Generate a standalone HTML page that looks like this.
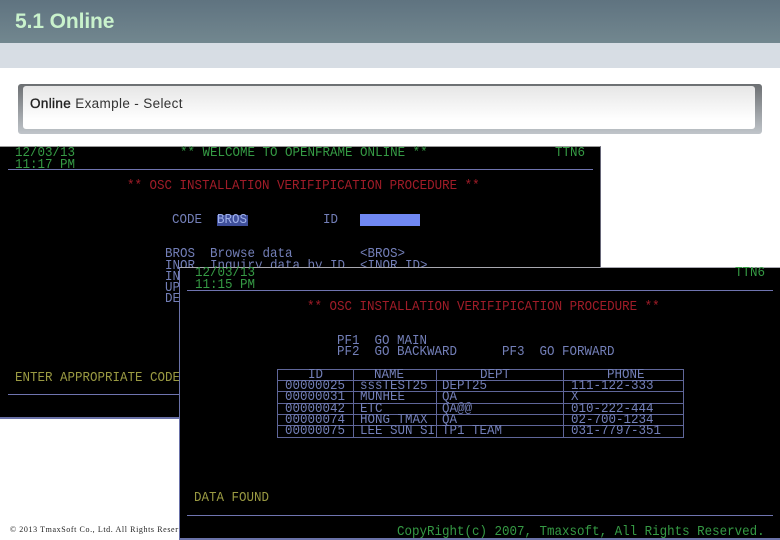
<!DOCTYPE html>
<html><head><meta charset="utf-8"><style>
html,body{margin:0;padding:0}
body{width:780px;height:540px;background:#fff;position:relative;overflow:hidden;font-family:"Liberation Sans",sans-serif}
div{position:absolute}
.t{font:14px/12px "Liberation Mono",monospace;white-space:pre;height:12px;margin-top:-1px;transform:scaleX(.893);transform-origin:0 0}
.g{color:#359a44}.r{color:#a01c28}.b{color:#737fb8}.y{color:#9a9a42}
.h{height:1px;background:#6f74b0}
.l{background:#5f6699}
</style></head><body>
<div style="left:0;top:0;width:780px;height:43px;background:linear-gradient(#5f7380,#72878f)"></div>
<div style="left:0;top:43px;width:780px;height:25px;background:#d7dde4"></div>
<div style="left:15px;top:9px;font:bold 21px/26px 'Liberation Sans',sans-serif;color:#c9f2cc;letter-spacing:-.1px">5.1 Online</div>
<div style="left:18px;top:84px;width:744px;height:50px;border-radius:3px;background:linear-gradient(#6c6f72,#c0c5ca)"></div>
<div style="left:23px;top:86px;width:732px;height:43px;border-radius:3px;background:linear-gradient(#e6e6e6,#fff 80%)"></div>
<div style="left:30px;top:95px;font:13.5px/18px 'Liberation Sans',sans-serif;color:#333;letter-spacing:.35px;white-space:pre"><span style="-webkit-text-stroke:.35px #222;color:#222">Online</span> Example - Select</div>
<div style="left:10px;top:525px;font:8px/10px 'Liberation Serif',serif;color:#222;white-space:pre;letter-spacing:.6px">© 2013 TmaxSoft Co., Ltd. All Rights Reserved.</div>

<div style="left:0;top:146px;width:601px;height:272px;background:#000;border-top:1px solid #999;border-right:1px solid #667;box-sizing:border-box"></div>
<div style="left:0;top:417px;width:601px;height:2px;background:#6a72a8"></div>
<div class="t g" style="left:15px;top:148px">12/03/13</div>
<div class="t g" style="left:15px;top:160px">11:17 PM</div>
<div class="h" style="left:8px;top:169px;width:585px"></div>
<div class="t g" style="left:180px;top:148px">** WELCOME TO OPENFRAME ONLINE **</div>
<div class="t g" style="left:555px;top:148px">TTN6</div>
<div class="t r" style="left:127px;top:181px">** OSC INSTALLATION VERIFIPICATION PROCEDURE **</div>
<div class="t b" style="left:172px;top:215px">CODE</div>
<div style="left:217px;top:215px;width:31px;height:11px;background:#3f4f9a"></div>
<div class="t" style="left:217px;top:215px;color:#9fb0ea">BROS</div>
<div class="t b" style="left:323px;top:215px">ID</div>
<div style="left:360px;top:214px;width:60px;height:12px;background:#6f87f2"></div>
<div class="t b" style="left:165px;top:249px">BROS  Browse data</div>
<div class="t b" style="left:360px;top:249px">&lt;BROS&gt;</div>
<div class="t b" style="left:165px;top:261px">INOR  Inquiry data by ID</div>
<div class="t b" style="left:360px;top:261px">&lt;INOR ID&gt;</div>
<div class="t b" style="left:165px;top:272px">IN</div>
<div class="t b" style="left:165px;top:283px">UP</div>
<div class="t b" style="left:165px;top:294px">DE</div>
<div class="t y" style="left:15px;top:373px">ENTER APPROPRIATE CODE</div>
<div class="h" style="left:8px;top:394px;width:585px"></div>

<div style="left:179px;top:267px;width:601px;height:273px;background:#000;border-top:1px solid #a8a8b0;border-left:1px solid #6a72a8;box-sizing:border-box"></div>
<div style="left:179px;top:538px;width:601px;height:2px;background:#6a72a8"></div>
<div class="t g" style="left:195px;top:268px">12/03/13</div>
<div class="t g" style="left:195px;top:280px">11:15 PM</div>
<div class="h" style="left:187px;top:290px;width:586px"></div>
<div class="t g" style="left:735px;top:268px">TTN6</div>
<div class="t r" style="left:307px;top:302px">** OSC INSTALLATION VERIFIPICATION PROCEDURE **</div>
<div class="t b" style="left:337px;top:336px">PF1  GO MAIN</div>
<div class="t b" style="left:337px;top:347px">PF2  GO BACKWARD</div>
<div class="t b" style="left:502px;top:347px">PF3  GO FORWARD</div>

<div class="l" style="left:277px;top:369px;width:407px;height:1px"></div>
<div class="l" style="left:277px;top:380px;width:407px;height:1px"></div>
<div class="l" style="left:277px;top:391px;width:407px;height:1px"></div>
<div class="l" style="left:277px;top:403px;width:407px;height:1px"></div>
<div class="l" style="left:277px;top:414px;width:407px;height:1px"></div>
<div class="l" style="left:277px;top:425px;width:407px;height:1px"></div>
<div class="l" style="left:277px;top:437px;width:407px;height:1px"></div>
<div class="l" style="left:277px;top:369px;width:1px;height:69px"></div>
<div class="l" style="left:353px;top:369px;width:1px;height:69px"></div>
<div class="l" style="left:436px;top:369px;width:1px;height:69px"></div>
<div class="l" style="left:563px;top:369px;width:1px;height:69px"></div>
<div class="l" style="left:683px;top:369px;width:1px;height:69px"></div>

<div class="t b" style="left:308px;top:370px">ID</div>
<div class="t b" style="left:374px;top:370px">NAME</div>
<div class="t b" style="left:480px;top:370px">DEPT</div>
<div class="t b" style="left:607px;top:370px">PHONE</div>

<div class="t b" style="left:285px;top:381px">00000025</div>
<div class="t b" style="left:360px;top:381px">sssTEST25</div>
<div class="t b" style="left:442px;top:381px">DEPT25</div>
<div class="t b" style="left:571px;top:381px">111-122-333</div>

<div class="t b" style="left:285px;top:392px">00000031</div>
<div class="t b" style="left:360px;top:392px">MUNHEE</div>
<div class="t b" style="left:442px;top:392px">QA</div>
<div class="t b" style="left:571px;top:392px">X</div>

<div class="t b" style="left:285px;top:404px">00000042</div>
<div class="t b" style="left:360px;top:404px">ETC</div>
<div class="t b" style="left:442px;top:404px">QA@@</div>
<div class="t b" style="left:571px;top:404px">010-222-444</div>

<div class="t b" style="left:285px;top:415px">00000074</div>
<div class="t b" style="left:360px;top:415px">HONG TMAX</div>
<div class="t b" style="left:442px;top:415px">QA</div>
<div class="t b" style="left:571px;top:415px">02-700-1234</div>

<div class="t b" style="left:285px;top:426px">00000075</div>
<div class="t b" style="left:360px;top:426px">LEE SUN SI</div>
<div class="t b" style="left:442px;top:426px">TP1 TEAM</div>
<div class="t b" style="left:571px;top:426px">031-7797-351</div>

<div class="t y" style="left:194px;top:493px">DATA FOUND</div>
<div class="h" style="left:187px;top:515px;width:586px"></div>
<div class="t g" style="left:397px;top:527px">CopyRight(c) 2007, Tmaxsoft, All Rights Reserved.</div>
</body></html>
